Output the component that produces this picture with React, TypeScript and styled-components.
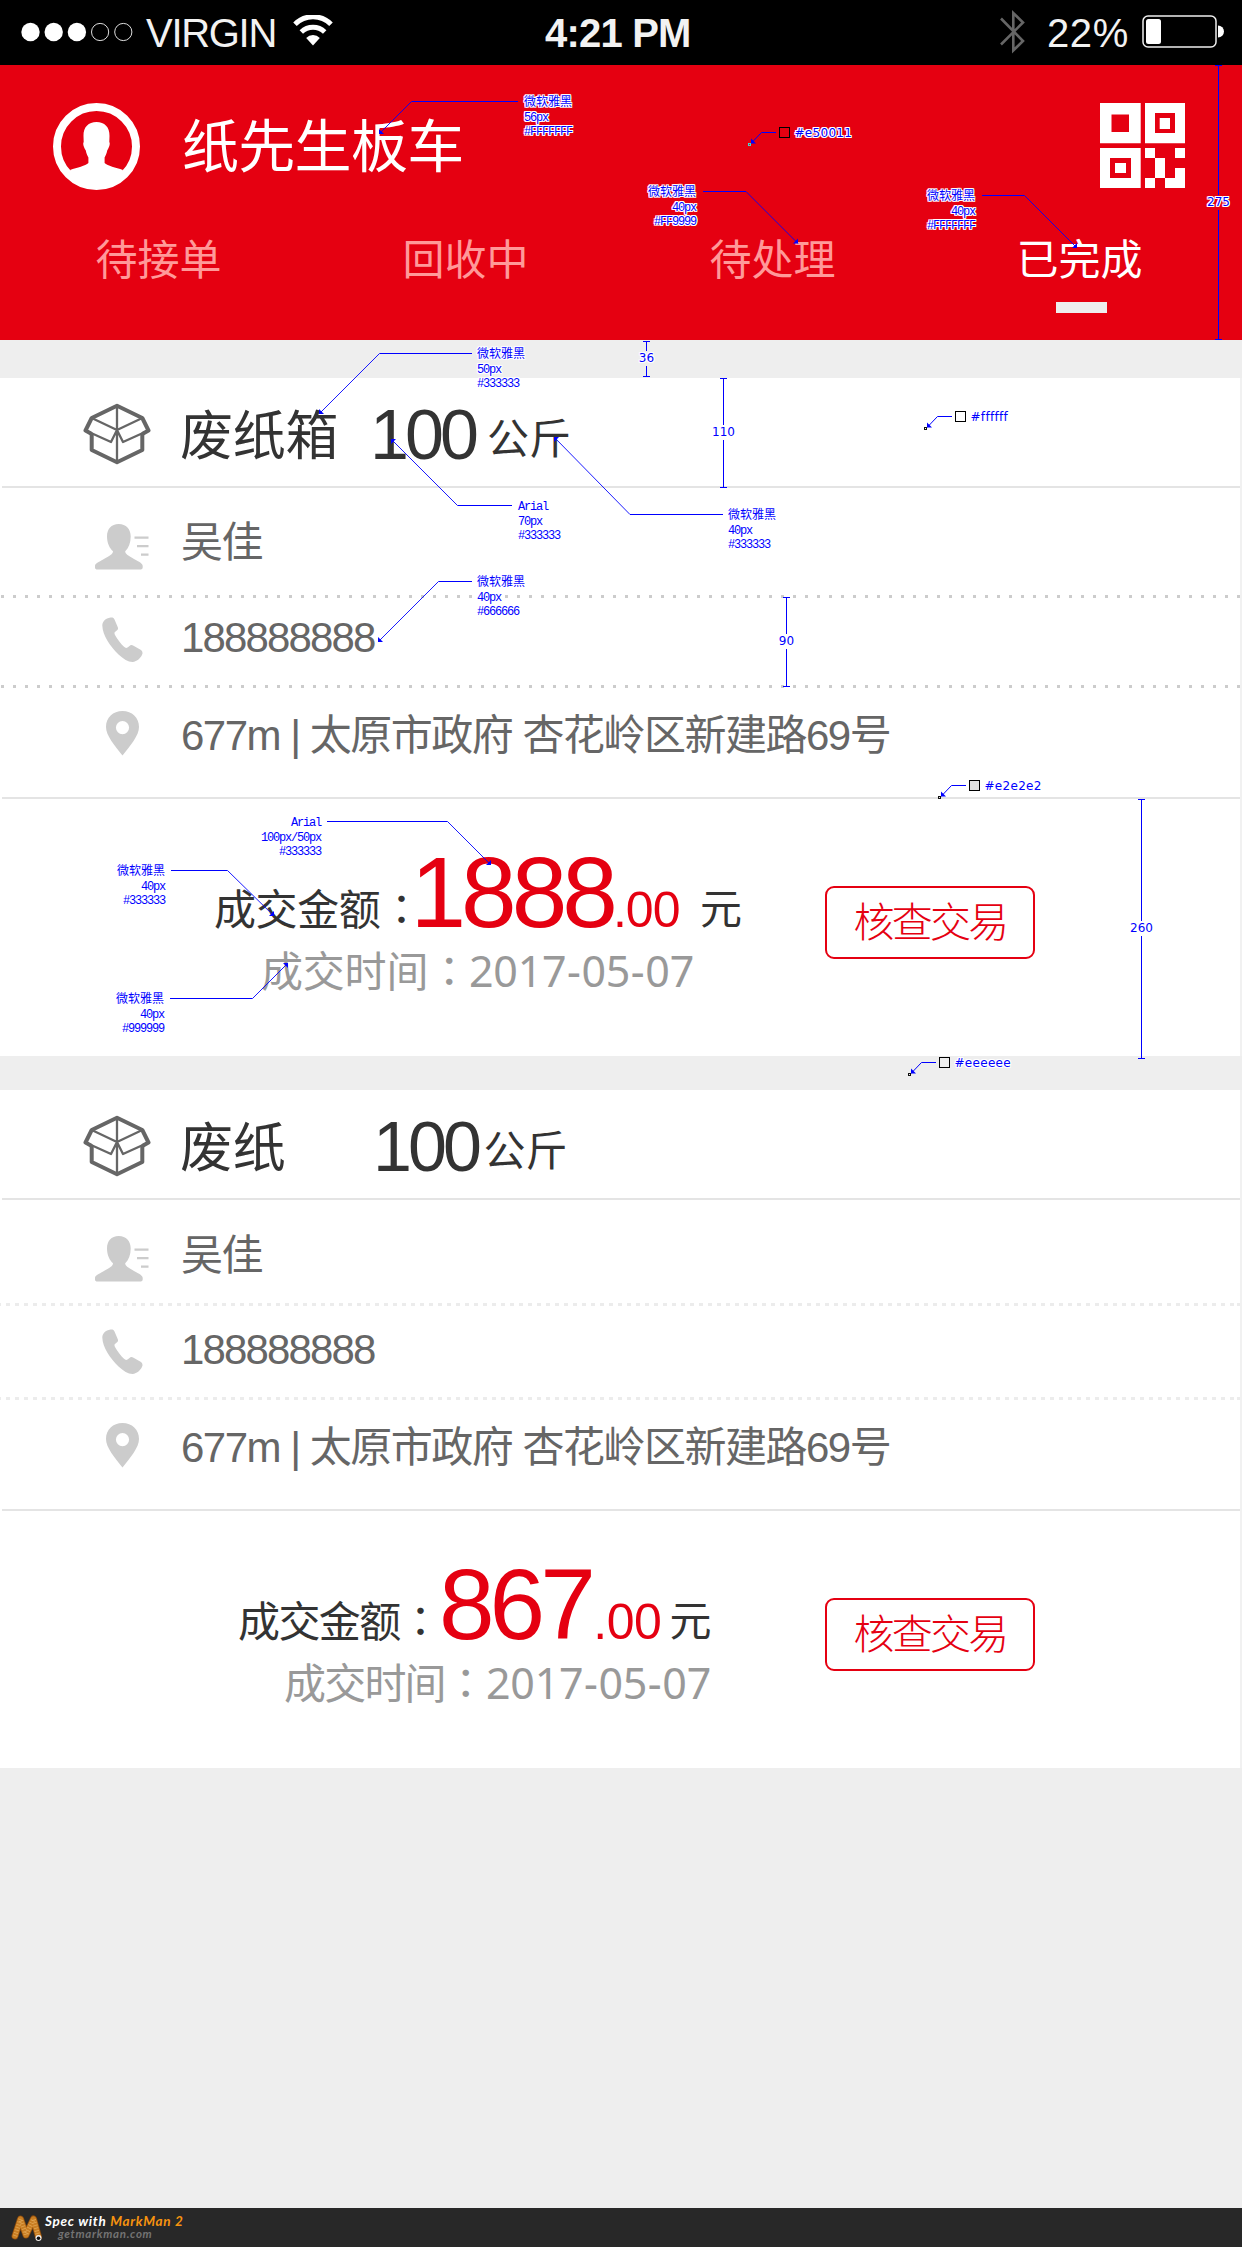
import React from "react";
import styled, { createGlobalStyle } from "styled-components";

const GlobalStyle = createGlobalStyle`
  * { box-sizing: border-box; }
  body { margin: 0; background: #eeeeee; }
  svg { display: block; flex: none; }
`;

const RED = "#e50011";
const BLUE = "#0000ff";

const Page = styled.div`
  position: relative;
  display: flex;
  flex-direction: column;
  width: 1242px;
  height: 2247px;
  overflow: hidden;
  background: #eeeeee;
  font-family: "Liberation Sans", "Noto Sans CJK SC", sans-serif;
`;

/* Text whose baseline sits `base` px below the top of its container */
const Text = styled.span<{ $size: number; $base: number; $ls?: number; $color?: string; $left?: number; $width?: number; $weight?: number }>`
  flex: none;
  display: block;
  white-space: pre;
  line-height: 1;
  font-size: ${(p) => p.$size}px;
  font-weight: ${(p) => p.$weight ?? 400};
  letter-spacing: ${(p) => p.$ls ?? 0}px;
  color: ${(p) => p.$color ?? "#333333"};
  margin-top: ${(p) => p.$base - 0.8465 * p.$size}px;
  margin-left: ${(p) => p.$left ?? 0}px;
  width: ${(p) => (p.$width ? `${p.$width}px` : "auto")};
`;

const Colon = styled.span`
  font-family: "Noto Sans CJK TC", sans-serif;
  line-height: 0;
`;

const StatusBar = styled.header`
  display: flex;
  align-items: flex-start;
  height: 65px;
  flex: none;
  background: #000;
`;

const StatusSlot = styled.div<{ $left: number; $top: number }>`
  margin-left: ${(p) => p.$left}px;
  margin-top: ${(p) => p.$top}px;
`;

const StatusText = styled(Text)`
  color: #f2f2f2;
`;

const Header = styled.section`
  display: flex;
  flex-direction: column;
  height: 275px;
  flex: none;
  background: ${RED};
`;

const Brand = styled.div`
  display: flex;
  align-items: flex-start;
  height: 160px;
  padding: 38px 57px 0 53px;
`;

const QrSlot = styled.div`
  margin-left: auto;
`;

const Tabs = styled.nav`
  display: grid;
  grid-template-columns: 307px 307px 307px 1fr;
  padding-left: 95.5px;
`;

const Tab = styled.div`
  display: flex;
  flex-direction: column;
  align-items: flex-start;
`;

const Underline = styled.i`
  width: 51px;
  height: 11px;
  margin: 20px 0 0 39px;
  background: #eeeeee;
`;

const Card = styled.article<{ $gap: number }>`
  display: flex;
  flex-direction: column;
  flex: none;
  height: 678px;
  margin-top: ${(p) => p.$gap}px;
  border-right: 2px solid #f1f1f1;
  background: #fff;
`;

const Row = styled.div<{ $height: number }>`
  display: flex;
  align-items: flex-start;
  flex: none;
  height: ${(p) => p.$height}px;
`;

const IconSlot = styled.div<{ $left: number; $top: number }>`
  flex: none;
  width: 181px;
  padding-left: ${(p) => p.$left}px;
  padding-top: ${(p) => p.$top}px;
`;

const Rule = styled.hr`
  flex: none;
  align-self: stretch;
  height: 2px;
  margin: 0 0 0 2px;
  border: 0;
  background: #e4e4e4;
`;

const Dots = styled.hr<{ $faint?: boolean }>`
  flex: none;
  width: 100%;
  height: 3px;
  margin: 0;
  border: 0;
  background: ${(p) =>
    p.$faint
      ? "repeating-linear-gradient(90deg, #ececec 0 4px, #fff 4px 9px) -3px 0"
      : "repeating-linear-gradient(90deg, #fff 0 1px, #cccccc 1px 4px, #fff 4px 12px)"};
`;

const Deal = styled.div`
  display: flex;
  flex: 1;
`;

const Summary = styled.div`
  width: 825px;
  flex: none;
`;

const AmountLine = styled.div`
  display: flex;
  align-items: flex-start;
  height: 140px;
`;

const DateLine = styled.div`
  display: flex;
  align-items: flex-start;
`;

const DateText = styled(Text)`
  font-family: "Noto Sans", sans-serif;
  b { font-weight: 400; padding: 0 1px 0 0.5px; }
`;

const CheckButton = styled.button`
  display: flex;
  align-items: flex-start;
  justify-content: center;
  width: 210px;
  height: 73px;
  margin: 87px 0 0;
  padding: 0;
  border: 2px solid ${RED};
  border-radius: 9px;
  background: #fff;
  font-family: inherit;
`;

const Footer = styled.footer`
  display: flex;
  align-items: flex-start;
  flex: none;
  height: 39px;
  margin-top: auto;
  padding: 6px 0 0 11px;
  background: #282828;
`;

const FooterText = styled.div`
  display: flex;
  flex-direction: column;
  margin-left: 1px;
  font-family: Lato, sans-serif;
  font-style: italic;
  font-weight: 700;
  white-space: nowrap;
`;

const FooterTop = styled.span`
  font-size: 13.5px;
  line-height: 14px;
  letter-spacing: 0.7px;
  color: #fff;
  em { color: #f7930f; }
`;

const FooterLink = styled.span`
  margin-left: 13px;
  font-size: 11.5px;
  line-height: 12px;
  letter-spacing: 0.7px;
  color: #737373;
`;

const Overlay = styled.div`
  position: absolute;
  inset: 0;
  pointer-events: none;
`;

const Halo = `text-shadow: 1px 0 #fff, -1px 0 #fff, 0 1px #fff, 0 -1px #fff, 1px 1px #fff, -1px -1px #fff, 1px -1px #fff, -1px 1px #fff;`;

const Note = styled.div<{ $x: number; $y: number; $right?: boolean }>`
  position: absolute;
  top: ${(p) => p.$y - 6}px;
  left: ${(p) => p.$x}px;
  ${(p) => (p.$right ? "transform: translateX(-100%); text-align: right;" : "")}
  color: ${BLUE};
  font-family: "Liberation Mono", "Noto Sans CJK SC", monospace;
  font-size: 12px;
  white-space: nowrap;
  ${Halo}
`;

const NoteLine = styled.div<{ $cjk?: boolean; $h?: number }>`
  height: ${(p) => p.$h ?? 14}px;
  line-height: 14px;
  letter-spacing: ${(p) => (p.$cjk ? 0 : -1.2)}px;
`;

const Tag = styled.div<{ $x: number; $y: number; $center?: boolean }>`
  position: absolute;
  left: ${(p) => p.$x}px;
  top: ${(p) => p.$y - 7}px;
  ${(p) => (p.$center ? "transform: translateX(-50%);" : "letter-spacing: 0.3px;")}
  color: ${BLUE};
  font: 12px/14px "DejaVu Sans", sans-serif;
  white-space: nowrap;
  ${Halo}
`;

type NoteData = { x: number; y: number; right?: boolean; lines: [string, string, string]; path: [number, number, number, number] };

/* path: label-side x, bend x, arrow tip x, arrow tip y */
const notes: NoteData[] = [
  { x: 524, y: 102, lines: ["微软雅黑", "56px", "#FFFFFFF"], path: [518, 411.5, 379, 134] },
  { x: 696, y: 192, right: true, lines: ["微软雅黑", "40px", "#FF9999"], path: [703, 746, 798, 243.5] },
  { x: 975, y: 196, right: true, lines: ["微软雅黑", "40px", "#FFFFFFF"], path: [982, 1024.5, 1077, 248] },
  { x: 477, y: 354, lines: ["微软雅黑", "50px", "#333333"], path: [472, 379.5, 319, 414] },
  { x: 518, y: 506, lines: ["Arial", "70px", "#333333"], path: [512, 457.5, 391, 439] },
  { x: 728, y: 515, lines: ["微软雅黑", "40px", "#333333"], path: [723, 630, 554, 437] },
  { x: 477, y: 582, lines: ["微软雅黑", "40px", "#666666"], path: [472, 438.5, 378, 642] },
  { x: 321, y: 822, right: true, lines: ["Arial", "100px/50px", "#333333"], path: [327, 447.5, 491, 865] },
  { x: 165, y: 871, right: true, lines: ["微软雅黑", "40px", "#333333"], path: [171, 227.5, 274, 916] },
  { x: 164, y: 999, right: true, lines: ["微软雅黑", "40px", "#999999"], path: [170, 252.5, 288, 963] },
];

const swatches = [
  { x: 748, y: 143, text: "#e50011", fill: "#e50011" },
  { x: 924, y: 427, text: "#ffffff", fill: "#ffffff" },
  { x: 938, y: 796, text: "#e2e2e2", fill: "#e2e2e2" },
  { x: 908, y: 1073, text: "#eeeeee", fill: "#eeeeee" },
];

const dims = [
  { x: 1218.5, a: 65.5, b: 339.5, c: 202, text: "275" },
  { x: 646.5, a: 341.5, b: 376.5, c: 358, text: "36" },
  { x: 723.5, a: 378.5, b: 487.5, c: 432, text: "110" },
  { x: 786.5, a: 597.5, b: 686.5, c: 641, text: "90" },
  { x: 1141.5, a: 799.5, b: 1058.5, c: 928, text: "260" },
];

function Arrow({ x, y, fromX, fromY }: { x: number; y: number; fromX: number; fromY: number }) {
  const sx = fromX < x ? -1 : 1;
  const sy = fromY < y ? -1 : 1;
  return <path d={`M${x} ${y}L${x + 5 * sx} ${y}L${x} ${y + 5 * sy}Z`} fill={BLUE} />;
}

function Annotations() {
  return (
    <Overlay>
      <svg width="1242" height="2247" fill="none" stroke="none">
        {notes.map((n, i) => {
          const [s, b, tx, ty] = n.path;
          const y = n.y - 0.5;
          return (
            <g key={i}>
              <path d={`M${s} ${y}H${b}`} stroke={BLUE} />
              <path d={`M${b} ${y}L${tx} ${ty}`} stroke={BLUE} strokeWidth="0.9" />
              <Arrow x={tx} y={ty} fromX={b} fromY={y} />
            </g>
          );
        })}
        {swatches.map((s) => (
          <g key={s.text}>
            <path d={`M${s.x + 28} ${s.y - 10.5}H${s.x + 13.5}L${s.x + 3} ${s.y + 0.5}`} stroke={BLUE} />
            <path d={`M${s.x + 3} ${s.y + 0.5}V${s.y - 4.5}L${s.x + 8} ${s.y + 0.5}Z`} fill={BLUE} />
            <rect x={s.x + 0.5} y={s.y + 0.5} width="2" height="2" stroke={s.fill === RED ? "#3fd9d0" : "#111"} />
            <rect x={s.x + 31.5} y={s.y - 15.5} width="10" height="10" fill={s.fill} stroke="#000" />
          </g>
        ))}
        {dims.map((d) => (
          <path
            key={d.text}
            d={`M${d.x - 3.5} ${d.a}h7M${d.x - 3.5} ${d.b}h7M${d.x} ${d.a}V${d.c - 7}M${d.x} ${d.c + 8}V${d.b}`}
            stroke={BLUE}
          />
        ))}
      </svg>
      {notes.map((n, i) => (
        <Note key={i} $x={n.x} $y={n.y} $right={n.right}>
          <NoteLine $h={15} $cjk={n.lines[0] !== "Arial"}>{n.lines[0]}</NoteLine>
          <NoteLine>{n.lines[1]}</NoteLine>
          <NoteLine>{n.lines[2]}</NoteLine>
        </Note>
      ))}
      {swatches.map((s) => (
        <Tag key={s.text} $x={s.x + 46.5} $y={s.y - 10}>{s.text}</Tag>
      ))}
      {dims.map((d) => (
        <Tag key={d.text} $x={d.x} $y={d.c} $center>{d.text}</Tag>
      ))}
    </Overlay>
  );
}

const SignalIcon = () => (
  <svg width="114" height="22" viewBox="0 0 114 22">
    {[0, 1, 2, 3, 4].map((i) => (
      <circle key={i} cx={10.5 + i * 23.2} cy="11" r={i < 3 ? 9.2 : 8.6} fill={i < 3 ? "#fff" : "none"} stroke={i < 3 ? "none" : "#ddd"} />
    ))}
  </svg>
);

const WifiIcon = () => (
  <svg width="40" height="31" viewBox="0 0 40 31" fill="none" stroke="#fff">
    <path d="M2 9.2a25.5 25.5 0 0 1 36 0" strokeWidth="5" />
    <path d="M8.3 17a17 17 0 0 1 23.4 0" strokeWidth="5" />
    <path d="M20 30.5l-6.8-7.6a9.6 9.6 0 0 1 13.6 0z" fill="#fff" stroke="none" />
  </svg>
);

const BluetoothIcon = () => (
  <svg width="26" height="46" viewBox="0 0 26 46" fill="none" stroke="#666" strokeWidth="2.6">
    <path d="M1 9.5L23 32 13.3 41.5V4L23 13.500 1 35.500" />
  </svg>
);

const BatteryIcon = () => (
  <svg width="82" height="33" viewBox="0 0 82 33">
    <rect x="1" y="1" width="73" height="31" rx="5" fill="none" stroke="#eee" strokeWidth="1.5" />
    <rect x="4" y="4" width="15" height="25" rx="2.500" fill="#fff" />
    <path d="M76 10.500a6 6 0 0 1 0 12z" fill="#fff" />
  </svg>
);

const AvatarIcon = () => (
  <svg width="87" height="88" viewBox="0 0 87 88">
    <circle cx="43.500" cy="43.500" r="39.500" fill="none" stroke="#fff" strokeWidth="8" />
    <path
      d="M43.500 19c-8 0-13.200 5-13 14l.2 6c-1.200 1.500.2 5.500 2 8.200.7 3.800 2 5.800 2.700 7.300V60c-3 3-11 4.500-18.400 7C21.500 78 31.500 84 43.500 84s22-6 26.500-17C62.600 64.500 54.600 63 51.600 60v-5.500c.7-1.500 2-3.500 2.700-7.300 1.800-2.700 3.200-6.700 2-8.200l.2-6c.2-9-5-14-13-14z"
      fill="#fff"
    />
  </svg>
);

const QrIcon = () => (
  <svg width="85" height="85" viewBox="0 0 85 85" fill="#fff" fillRule="evenodd">
    <path d="M0 0H40.700V40.300H0ZM11.500 11.500V29H29V11.500Z" />
    <path d="M45 0H85V40.300H45ZM55 10V30H75V10ZM59.700 15H70V26H59.700Z" />
    <path d="M0 45H40.700V85H0ZM10 55V75H31V55ZM15 60H26V70H15Z" />
    <path d="M45 45H55V55H45ZM75 45H85V55H75ZM55 55H65V75H55ZM45 75H55V85H45ZM65 75H75V65H85V85H65Z" />
  </svg>
);

const BoxIcon = () => (
  <svg width="69" height="62" viewBox="0 0 69 62" fill="none" stroke="#666" strokeLinejoin="round">
    <path d="M8.700 31L2.500 27.500 8.700 15 34 2.800 59.300 15 65.500 27.500 59.300 31" strokeWidth="4" />
    <path d="M8.700 30V47L34 59.300 59.300 47V30" strokeWidth="4" />
    <path d="M34 3V58M8.700 15L34 27 59.300 15M34 27L28 39 2.500 27.500M34 27L40 39 65.500 27.500" strokeWidth="2.300" />
  </svg>
);

const UserIcon = () => (
  <svg width="55" height="46" viewBox="0 0 55 46" fill="#cccccc">
    <path d="M24.700 0c-7.500 0-11.700 5-11.700 12.500 0 6.500 2.500 11.500 6 14.800 0 3-3.500 4.500-9.500 8C4.500 38.200 1 39.500 1 42v1.500C1 45 2 45.500 3.500 45.500H46c1.500 0 2.700-.5 2.700-2V42c0-2.500-3.500-4.300-8.700-7-5.500-3.500-8.800-4.700-8.800-7.700 3.500-3.300 5.500-8.300 5.500-14.800C36.700 5 32.200 0 24.700 0z" />
    <path d="M40.500 12.500H54.500v2.300H40.500zM43 21H54.500v2.300H43zM47 29.500H54.500v2.300H47z" />
  </svg>
);

const PhoneIcon = () => (
  <svg width="42" height="46" viewBox="0 0 42 46" fill="#cccccc">
    <path d="M8.500.5C3.500 1.200.3 4.500.3 8.500c.3 10 7.700 20.500 16.200 29 5 4.500 9.500 7.500 14 7.500 4.500-.3 9-4.500 10-8.500.2-1.500-.5-2.500-1.500-3.500L31.500 28.700c-1.500-1-3-1-4 .2l-2 1.600c-1.200.8-2.500.3-3.500-.7C18.500 26.500 15.500 22.500 13 18c-.7-1.500-.8-2.500.3-3.200l2-1.800c.8-.7 1-1.500.5-2.800L12.500 2.500C12 .8 10.500.2 8.500.5z" />
  </svg>
);

const PinIcon = () => (
  <svg width="33" height="45" viewBox="0 0 33 45" fill="#cccccc" fillRule="evenodd">
    <path d="M16.500 0C7 0 0 6.500 0 16c0 8.500 8.500 18.500 16.500 28.500C24.500 34.500 33 24.500 33 16 33 6.500 26 0 16.500 0zM16.500 10a6.600 6.600 0 1 1 0 13.200a6.600 6.600 0 1 1 0-13.200z" />
  </svg>
);

const MarkManIcon = () => (
  <svg width="33" height="29" viewBox="0 0 33 29" fill="none" strokeLinecap="round" strokeLinejoin="round">
    <path d="M4 22L9.500 5 15 21 22.500 5 27.500 23" stroke="#8a4a0c" strokeWidth="7" />
    <path d="M4 22L9.500 5 15 21 22.500 5 27.500 23" stroke="#c87d22" strokeWidth="5.500" />
    <path d="M4 22L9.500 5 15 21 22.500 5 27.500 23" stroke="#e0a452" strokeWidth="4.500" strokeDasharray="0.8 2" strokeLinecap="butt" />
    <circle cx="27.500" cy="24" r="3" fill="#eee" />
    <circle cx="27.500" cy="24.300" r="1.800" fill="#111" />
  </svg>
);

type Order = {
  gap: number;
  title: string;
  weightX: number;
  unitGap: number;
  rows: [number, number, number];
  faint?: boolean;
  labelX: number;
  labelLs: number;
  amountX: number;
  amount: string;
  centsGap: number;
  centsLs: number;
  yuanX: number;
  dateX: number;
  dateLs: number;
  dateWidth: number;
};

const orders: Order[] = [
  {
    gap: 38, title: "废纸箱", weightX: 191, unitGap: 11.5, rows: [107, 87, 109],
    labelX: 214, labelLs: -0.4, amountX: 410.5, amount: "1888", centsGap: 0, centsLs: -1, yuanX: 20.5,
    dateX: 261, dateLs: -0.2, dateWidth: 208,
  },
  {
    gap: 34, title: "废纸", weightX: 194, unitGap: 5, rows: [103, 91, 109], faint: true,
    labelX: 238, labelLs: -1.6, amountX: 439, amount: "867", centsGap: 2.5, centsLs: -0.5, yuanX: 8,
    dateX: 284, dateLs: -1.8, dateWidth: 202,
  },
];

function OrderCard({ o }: { o: Order }) {
  const [r1, r2, r3] = o.rows;
  const shift = 107 - r1;
  return (
    <Card $gap={o.gap}>
      <Row $height={108}>
        <IconSlot $left={83} $top={25}><BoxIcon /></IconSlot>
        <Text $size={53} $base={77} $ls={-0.3} $width={o.weightX - 1} $left={-1}>{o.title}</Text>
        <Text $size={70} $base={81} $ls={-3.9}>100</Text>
        <Text $size={42} $base={77} $ls={0} $left={o.unitGap + 0.5}>公斤</Text>
      </Row>
      <Rule />
      <Row $height={r1}>
        <IconSlot $left={94} $top={36}><UserIcon /></IconSlot>
        <Text $size={42} $base={o.faint ? 71 : 70} $ls={-1.5} $color="#666666">吴佳</Text>
      </Row>
      <Dots $faint={o.faint} />
      <Row $height={r2}>
        <IconSlot $left={102} $top={19 + shift}><PhoneIcon /></IconSlot>
        <Text $size={42} $base={55 + shift} $ls={-1.85} $color="#666666">188888888</Text>
      </Row>
      <Dots $faint={o.faint} />
      <Row $height={r3}>
        <IconSlot $left={106} $top={23}><PinIcon /></IconSlot>
        <Text $size={42} $base={63} $ls={-1.5} $color="#666666">677m | 太原市政府 杏花岭区新建路69号</Text>
      </Row>
      <Rule />
      <Deal>
        <Summary>
          <AmountLine>
            <Text $size={42} $base={127} $ls={o.labelLs} $left={o.labelX} $width={o.amountX - o.labelX}>
              成交金额<Colon>：</Colon>
            </Text>
            <Text $size={100} $base={128} $ls={-5} $color={RED}>{o.amount}</Text>
            <Text $size={50} $base={128} $ls={o.centsLs} $left={o.centsGap} $color={RED}>.00</Text>
            <Text $size={42} $base={126} $left={o.yuanX}>元</Text>
          </AmountLine>
          <DateLine>
            <Text $size={42} $base={49} $ls={o.dateLs} $left={o.dateX} $width={o.dateWidth} $color="#999999">
              成交时间<Colon>：</Colon>
            </Text>
            <DateText $size={43} $base={46} $ls={-0.25} $color="#999999">2017<b>-</b>05<b>-</b>07</DateText>
          </DateLine>
        </Summary>
        <CheckButton>
          <Text $size={41} $base={50} $ls={-2.8} $color={RED} $weight={300}>核查交易</Text>
        </CheckButton>
      </Deal>
    </Card>
  );
}

export default function App() {
  return (
    <Page>
      <GlobalStyle />
      <StatusBar>
        <StatusSlot $left={20} $top={21}><SignalIcon /></StatusSlot>
        <StatusText $size={40} $base={47} $ls={-1.3} $left={12} $width={147}>VIRGIN</StatusText>
        <StatusSlot $left={0} $top={15}><WifiIcon /></StatusSlot>
        <StatusText $size={40} $base={47} $ls={-0.8} $left={212} $width={455} $weight={700}>4:21 PM</StatusText>
        <StatusSlot $left={0} $top={9}><BluetoothIcon /></StatusSlot>
        <StatusText $size={40} $base={47} $ls={0.6} $left={21} $width={95}>22%</StatusText>
        <StatusSlot $left={0} $top={15}><BatteryIcon /></StatusSlot>
      </StatusBar>
      <Header>
        <Brand>
          <AvatarIcon />
          <Text $size={57} $base={102 - 38} $ls={-0.7} $left={42} $color="#fff">纸先生板车</Text>
          <QrSlot><QrIcon /></QrSlot>
        </Brand>
        <Tabs>
          <Tab><Text $size={42} $base={51} $color="#ff9999">待接单</Text></Tab>
          <Tab><Text $size={42} $base={51} $color="#ff9999">回收中</Text></Tab>
          <Tab><Text $size={42} $base={51} $color="#ff9999">待处理</Text></Tab>
          <Tab>
            <Text $size={42} $base={51} $color="#fff">已完成</Text>
            <Underline />
          </Tab>
        </Tabs>
      </Header>
      {orders.map((o) => (
        <OrderCard key={o.title} o={o} />
      ))}
      <Footer>
        <MarkManIcon />
        <FooterText>
          <FooterTop>Spec with <em>MarkMan 2</em></FooterTop>
          <FooterLink>getmarkman.com</FooterLink>
        </FooterText>
      </Footer>
      <Annotations />
    </Page>
  );
}
